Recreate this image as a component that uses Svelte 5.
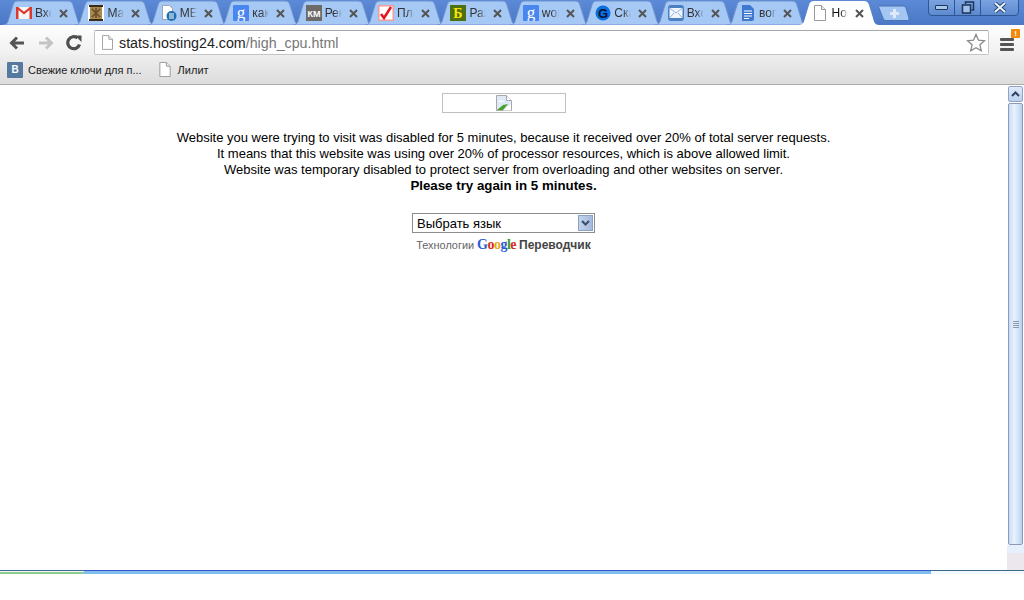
<script>
  const tabs = [
    { t: 'Вхо', i: 'gmail' }, { t: 'Mar', i: 'scroll' }, { t: 'MEI', i: 'docb' }, { t: 'как', i: 'g' },
    { t: 'Рек', i: 'km' }, { t: 'Пла', i: 'check' }, { t: 'Раз', i: 'b' }, { t: 'wor', i: 'g' },
    { t: 'Ска', i: 'gc' }, { t: 'Вхо', i: 'mail' }, { t: 'вог', i: 'docs' }, { t: 'Hos', i: 'page', active: true }
  ];
  const lines = [
    'Website you were trying to visit was disabled for 5 minutes, because it received over 20% of total server requests.',
    'It means that this website was using over 20% of processor resources, which is above allowed limit.',
    'Website was temporary disabled to protect server from overloading and other websites on server.'
  ];
</script>

{#snippet pageIcon(w, h)}
  <svg width={w} height={h} viewBox="0 0 12 16"><path d="M.5.5h7l4 4v11H.5z" fill="#fff" stroke="#999"/><path d="M7.5.5v4h4" fill="#eee" stroke="#999"/></svg>
{/snippet}

{#snippet favicon(i)}
  <svg class="fav" width="16" height="16" viewBox="0 0 16 16">
    {#if i === 'gmail'}
      <rect y="2" width="16" height="12" fill="#f6f6f6"/><path d="M0 2h2.500v12H0zM13.500 2H16v12h-2.500z" fill="#d93a2b"/><path d="M1 2.500 8 8l7-5.500" fill="none" stroke="#d93a2b" stroke-width="2.200"/>
    {:else if i === 'scroll'}
      <rect width="16" height="16" fill="#fff"/><rect x="2" y="1" width="12" height="14" fill="#a58a52"/><rect x="1" y="0" width="14" height="2" fill="#3a2a14"/><rect x="1" y="14" width="14" height="2" fill="#3a2a14"/><path d="M4 4l8 8M12 4l-8 8M8 3v10" stroke="#6d4a26" stroke-width="1.500"/>
    {:else if i === 'docb'}
      <path d="M1.500.5h7l3 3v11h-10z" fill="#fff" stroke="#9aa5b5"/><circle cx="10.500" cy="11" r="5" fill="#1d6fb0"/><path d="M8 9h5M8 11h5M8 13h5" stroke="#fff"/>
    {:else if i === 'g'}
      <rect width="16" height="16" rx="1" fill="#4a86f0"/><text x="8" y="12.500" text-anchor="middle" class="gf">g</text>
    {:else if i === 'km'}
      <rect width="16" height="16" fill="#6e6a68"/><text x="8" y="11.500" text-anchor="middle" class="kf">КМ</text>
    {:else if i === 'check'}
      <rect x=".75" y=".75" width="14.500" height="14.500" fill="#fff" stroke="#f49a9a" stroke-width="1.500"/><path d="M3 9l3 4 7-11" fill="none" stroke="#e8141c" stroke-width="2.500"/>
    {:else if i === 'b'}
      <rect width="16" height="16" fill="#4d7010"/><text x="8" y="13" text-anchor="middle" class="bf">Б</text>
    {:else if i === 'gc'}
      <circle cx="8" cy="8" r="7.500" fill="#0a6fe0"/><text x="8" y="12.500" text-anchor="middle" class="gcf">G</text>
    {:else if i === 'mail'}
      <rect width="16" height="16" rx="3" fill="#4a7fc0"/><rect x="1.500" y="3" width="13" height="10" fill="#f2f6fc"/><path d="M1.500 3l6.500 5 6.500-5M1.500 13l4.500-5M14.500 13L10 8" fill="none" stroke="#8fb2dc"/>
    {:else if i === 'docs'}
      <path d="M2 0h8l4 4v10a2 2 0 0 1-2 2H2z" fill="#3f78d0"/><path d="M4 6h8M4 8.500h8M4 11h8M4 13.500h5" stroke="#fff"/>
    {/if}
  </svg>
{/snippet}

<div class="window">
  <div class="strip">
    {#each tabs as tab}
      <div class="tab" class:active={tab.active}>
        <svg class="shape" width="80" height="25" viewBox="0 0 80 25">
          <path d="M0 25C4 25 5 22 6 18L10 5C11 2 12 1 16 1H64C68 1 69 2 70 5L74 18C75 22 76 25 80 25Z" />
        </svg>
        {#if tab.i === 'page'}
          <span class="fav">{@render pageIcon(12, 16)}</span>
        {:else}
          {@render favicon(tab.i)}
        {/if}
        <span class="label">{tab.t}</span>
        <svg class="close" width="9" height="9" viewBox="0 0 9 9"><path d="M1 1l7 7M8 1L1 8" stroke="#555" stroke-width="2"/></svg>
      </div>
    {/each}
    <svg class="newtab" width="32" height="16" viewBox="0 0 32 16">
      <path d="M1 1H25C27 1 27.500 2 28 3L31 13C31.500 15 30 15.500 29 15.500H8C6 15.500 5.500 14.500 5 13L1 3C.5 1.500 0 1 1 1Z" fill="#a4c6f2" stroke="#4a74b8"/>
      <path d="M12 8.500h9M16.500 4v9" stroke="#dfe9f8" stroke-width="3"/>
    </svg>
    <div class="winctl">
      <div class="wb min"><span></span></div>
      <div class="wb restore">
        <svg width="14" height="14" viewBox="0 0 14 14"><path d="M4.500 3V1h8v8h-2" fill="none" stroke="#1d3557" stroke-width="1.500"/><rect x="1.500" y="4" width="8" height="8" fill="#9ec0ea" stroke="#1d3557" stroke-width="1.500"/></svg>
      </div>
      <div class="wb x">
        <svg width="14" height="11" viewBox="0 0 14 11"><path d="M2 1l10 9M12 1L2 10" stroke="#24446e" stroke-width="4"/><path d="M2 1l10 9M12 1L2 10" stroke="#e6eefa" stroke-width="2.200"/></svg>
      </div>
    </div>
  </div>

  <div class="toolbar">
    <svg class="nav" width="18" height="16" viewBox="0 0 18 16"><path d="M16 8H4M9 2.500 3.500 8 9 13.500" fill="none" stroke="#555" stroke-width="3"/></svg>
    <svg class="nav" width="18" height="16" viewBox="0 0 18 16"><path d="M2 8h12M9 2.500 14.500 8 9 13.500" fill="none" stroke="#c4c4c4" stroke-width="3"/></svg>
    <svg class="nav" width="16" height="16" viewBox="0 0 16 16"><path d="M13.500 9.500A6 6 0 1 1 11.500 3" fill="none" stroke="#4f4f4f" stroke-width="3.200"/><path d="M9 .5h6.500V7z" fill="#4f4f4f"/></svg>
    <div class="omni">
      {@render pageIcon(11, 15)}
      <span class="url">stats.hosting24.com<span class="path">/high_cpu.html</span></span>
      <svg class="star" width="20" height="19" viewBox="0 0 20 19"><path d="M10 1.500l2.500 5.700 6 .6-4.600 4 1.400 6L10 14.700l-5.300 3.100 1.400-6-4.600-4 6-.6z" fill="#fff" stroke="#8a8a8a" stroke-width="1.300"/></svg>
    </div>
    <div class="menu">
      <span></span><span></span><span></span>
      <b>!</b>
    </div>
  </div>

  <div class="bookmarks">
    <div class="bm">
      <span class="vk">В</span>
      <span>Свежие ключи для п...</span>
    </div>
    <div class="bm second">
      {@render pageIcon(12, 15)}
      <span>Лилит</span>
    </div>
  </div>

  <div class="viewport">
    <main class="content">
      <div class="broken">
        <svg width="16" height="16" viewBox="0 0 16 16">
          <path d="M.5.5h10l5 5v10H.5z" fill="#dfe8f6" stroke="#a9a9a9"/>
          <path d="M10.500.5v5h5" fill="#fff" stroke="#a9a9a9"/>
          <path d="M2 7c2-2 5-2 6 0H2z" fill="#fff"/>
          <path d="M1 15l6-5 5-1-5 6z" fill="#4aa02c"/>
          <path d="M15 9l-8 6.500h8z" fill="#fff"/>
        </svg>
      </div>
      <div class="message">
        {#each lines as line}<div>{line}</div>{/each}
        <div class="strong">Please try again in 5 minutes.</div>
      </div>
      <div class="select">
        <span>Выбрать язык</span>
        <span class="arrow">
          <svg width="9" height="6" viewBox="0 0 9 6"><path d="M1 1l3.500 3.500L8 1" fill="none" stroke="#3c4f6b" stroke-width="2"/></svg>
        </span>
      </div>
      <div class="powered">
        <span>Технологии</span>
        <span class="google"><i class="c1">G</i><i class="c2">o</i><i class="c3">o</i><i class="c1">g</i><i class="c4">l</i><i class="c2">e</i></span>
        <b>Переводчик</b>
      </div>
    </main>
    <aside class="scroll">
      <div class="sbtn">
        <svg width="9" height="6" viewBox="0 0 9 6"><path d="M1 5l3.500-3.500L8 5" fill="none" stroke="#2f4260" stroke-width="2"/></svg>
      </div>
      <div class="thumb"><span></span><span></span><span></span><span></span></div>
      <div class="pale"></div>
      <div class="track"></div>
    </aside>
  </div>

  <div class="status">
    <div class="s1"></div>
    <div class="s2"></div>
    <div class="s3"></div>
  </div>
</div>

<style>
  :global(body) { margin: 0; background: #fff; }
  .window {
    width: 1024px; height: 600px; display: flex; flex-direction: column; overflow: hidden;
    font-family: "Liberation Sans", Arial, sans-serif; background: #fff;
  }
  .strip {
    height: 25px; flex: none; display: flex; padding-left: 3px; position: relative;
    background: linear-gradient(#5d8ad6, #4a78c6);
  }
  .tab {
    width: 80px; height: 25px; margin-right: -7.600px; flex: none; position: relative;
    display: flex; align-items: center; padding: 1px 0 0 13px; box-sizing: border-box;
  }
  .shape { position: absolute; left: 0; top: 0; }
  .shape path { fill: #a5c8f5; stroke: #6d93cf; stroke-width: 1; }
  .active { z-index: 2; }
  .active .shape path { fill: #fff; stroke: none; }
  .fav { position: relative; flex: none; width: 16px; height: 16px; display: flex; justify-content: center; }
  .gf { font: 17px "Liberation Serif", serif; fill: #fff; }
  .kf { font: bold 9px "Liberation Sans", sans-serif; fill: #fff; }
  .bf { font: bold 14px "Liberation Serif", serif; fill: #ffe600; }
  .gcf { font: bold 13px "Liberation Sans", sans-serif; fill: #05102a; }
  .label {
    position: relative; margin-left: 3px; width: 17px; overflow: hidden; white-space: nowrap;
    font-size: 12px; color: #333;
    -webkit-mask-image: linear-gradient(90deg, #000 55%, transparent);
    mask-image: linear-gradient(90deg, #000 55%, transparent);
  }
  .active .label { color: #111; }
  .close { position: relative; margin-left: 7px; flex: none; }
  .newtab { position: absolute; left: 878px; top: 5px; z-index: 3; }
  .winctl {
    position: absolute; left: 928px; top: -1px; width: 91px; height: 17px; display: flex;
    border: 1px solid #2f5694; border-radius: 0 0 4px 4px; box-sizing: border-box;
    background: linear-gradient(#7ba3e0, #5d8ad0);
  }
  .wb { display: flex; align-items: center; justify-content: center; border-right: 1px solid #2f5694; flex: none; }
  .min { width: 25px; }
  .min span { width: 11px; height: 3px; background: #a9c8ee; border: 1px solid #1d3557; border-radius: 1px; }
  .restore { width: 25px; }
  .x { flex: 1; border-right: none; }

  .toolbar {
    height: 30px; flex: none; display: flex; align-items: center; box-sizing: border-box;
    padding: 5px 0 0 8px; background: linear-gradient(#fefefe, #f0f0f0);
    position: relative;
  }
  .nav { flex: none; margin-right: 11px; }
  .nav:nth-child(3) { margin-right: 12px; }
  .omni {
    width: 895px; height: 25px; flex: none; box-sizing: border-box; display: flex; align-items: center;
    padding: 0 2px 0 7px; background: #fff; border: 1px solid #c4c4c4; border-top-color: #a8a8a8; border-radius: 2px;
  }
  .url { margin-left: 6px; font-size: 14.250px; color: #222; flex: 1; white-space: nowrap; }
  .path { color: #777; }
  .star { flex: none; }
  .menu { position: relative; width: 14px; margin-left: 11px; display: flex; flex-direction: column; gap: 2px; padding-top: 4px; }
  .menu span { height: 3px; background: #555; border-radius: 1px; }
  .menu b {
    position: absolute; left: 11px; top: -5px; width: 9px; height: 9px; background: #f0890c; color: #fff;
    font: bold 8px/9px "Liberation Sans", sans-serif; text-align: center; border-radius: 1px;
  }
  .bookmarks {
    height: 30px; flex: none; box-sizing: border-box; display: flex; align-items: center; padding-left: 7px;
    background: linear-gradient(#eeeeee, #dcdcdc); border-bottom: 1px solid #ababab;
    font-size: 11px; color: #222;
  }
  .bm { display: flex; align-items: center; gap: 5px; }
  .second { margin-left: 17px; gap: 7px; }
  .vk {
    width: 16px; height: 16px; background: #55799f; color: #fff; font: bold 10px/16px "Liberation Sans", sans-serif;
    text-align: center; border-radius: 1px;
  }
  .viewport { height: 485px; flex: none; display: flex; }
  .content { width: 1007px; flex: none; display: flex; flex-direction: column; align-items: center; }
  .broken {
    margin-top: 8px; width: 124px; height: 20px; box-sizing: border-box; border: 1px solid #c0c0c0;
    display: flex; justify-content: center; align-items: flex-start; padding-top: 1px;
  }
  .message { margin-top: 17px; font-size: 13px; line-height: 16px; text-align: center; color: #000; white-space: nowrap; }
  .strong { font-weight: bold; font-size: 13.300px; }
  .select {
    margin-top: 19px; width: 183px; height: 20px; box-sizing: border-box; border: 1px solid #8d8d8d;
    display: flex; align-items: center; justify-content: space-between; padding: 0 1px 0 4px; font-size: 13px; color: #000;
  }
  .arrow {
    width: 15px; height: 16px; display: flex; align-items: center; justify-content: center;
    background: linear-gradient(90deg, #c3d3ec, #a5bbdd); border: 1px solid #8ba2c5; box-sizing: border-box;
  }
  .powered { margin-top: 4px; display: flex; align-items: baseline; gap: 3px; font-size: 10.900px; color: #666; }
  .powered b { font-size: 12px; color: #444; }
  .google { font: bold 14px "Liberation Serif", serif; letter-spacing: -.5px; }
  .google i { font-style: normal; }
  .c1 { color: #2a5bd7; } .c2 { color: #d92b20; } .c3 { color: #e8a90c; } .c4 { color: #3a9a2e; }

  .scroll { width: 17px; flex: none; display: flex; flex-direction: column; }
  .sbtn {
    height: 16px; margin: 1px; box-sizing: border-box; border: 1px solid #8fa3c2; border-radius: 2px;
    background: linear-gradient(#dfeafb, #bcd0ee); display: flex; align-items: center; justify-content: center;
  }
  .thumb {
    height: 442px; flex: none; margin: 0 1px; box-sizing: border-box; border: 1px solid #8a9bb8; border-radius: 2px;
    background: linear-gradient(90deg, #c9dcf6, #e9f1fd 40%, #d4e3f8 70%, #b9cfee);
    display: flex; flex-direction: column; align-items: center; justify-content: center; gap: 1px;
  }
  .thumb span { width: 6px; height: 1px; background: #8c9ab0; }
  .pale { height: 8px; flex: none; background: #e6f0fd; }
  .track { flex: 1; background: #ebe7ec; }

  .status { height: 4px; flex: none; display: flex; }
  .status div { border-top: 1px solid #3a6a8a; box-sizing: border-box; }
  .s1 { width: 84px; background: linear-gradient(#f2f7f0 45%, #8ccb98 45%); }
  .s2 { width: 847px; background: #7fbcef; border-top-color: #3a55c8 !important; }
  .s3 { flex: 1; background: #f3f9fe; }
</style>
